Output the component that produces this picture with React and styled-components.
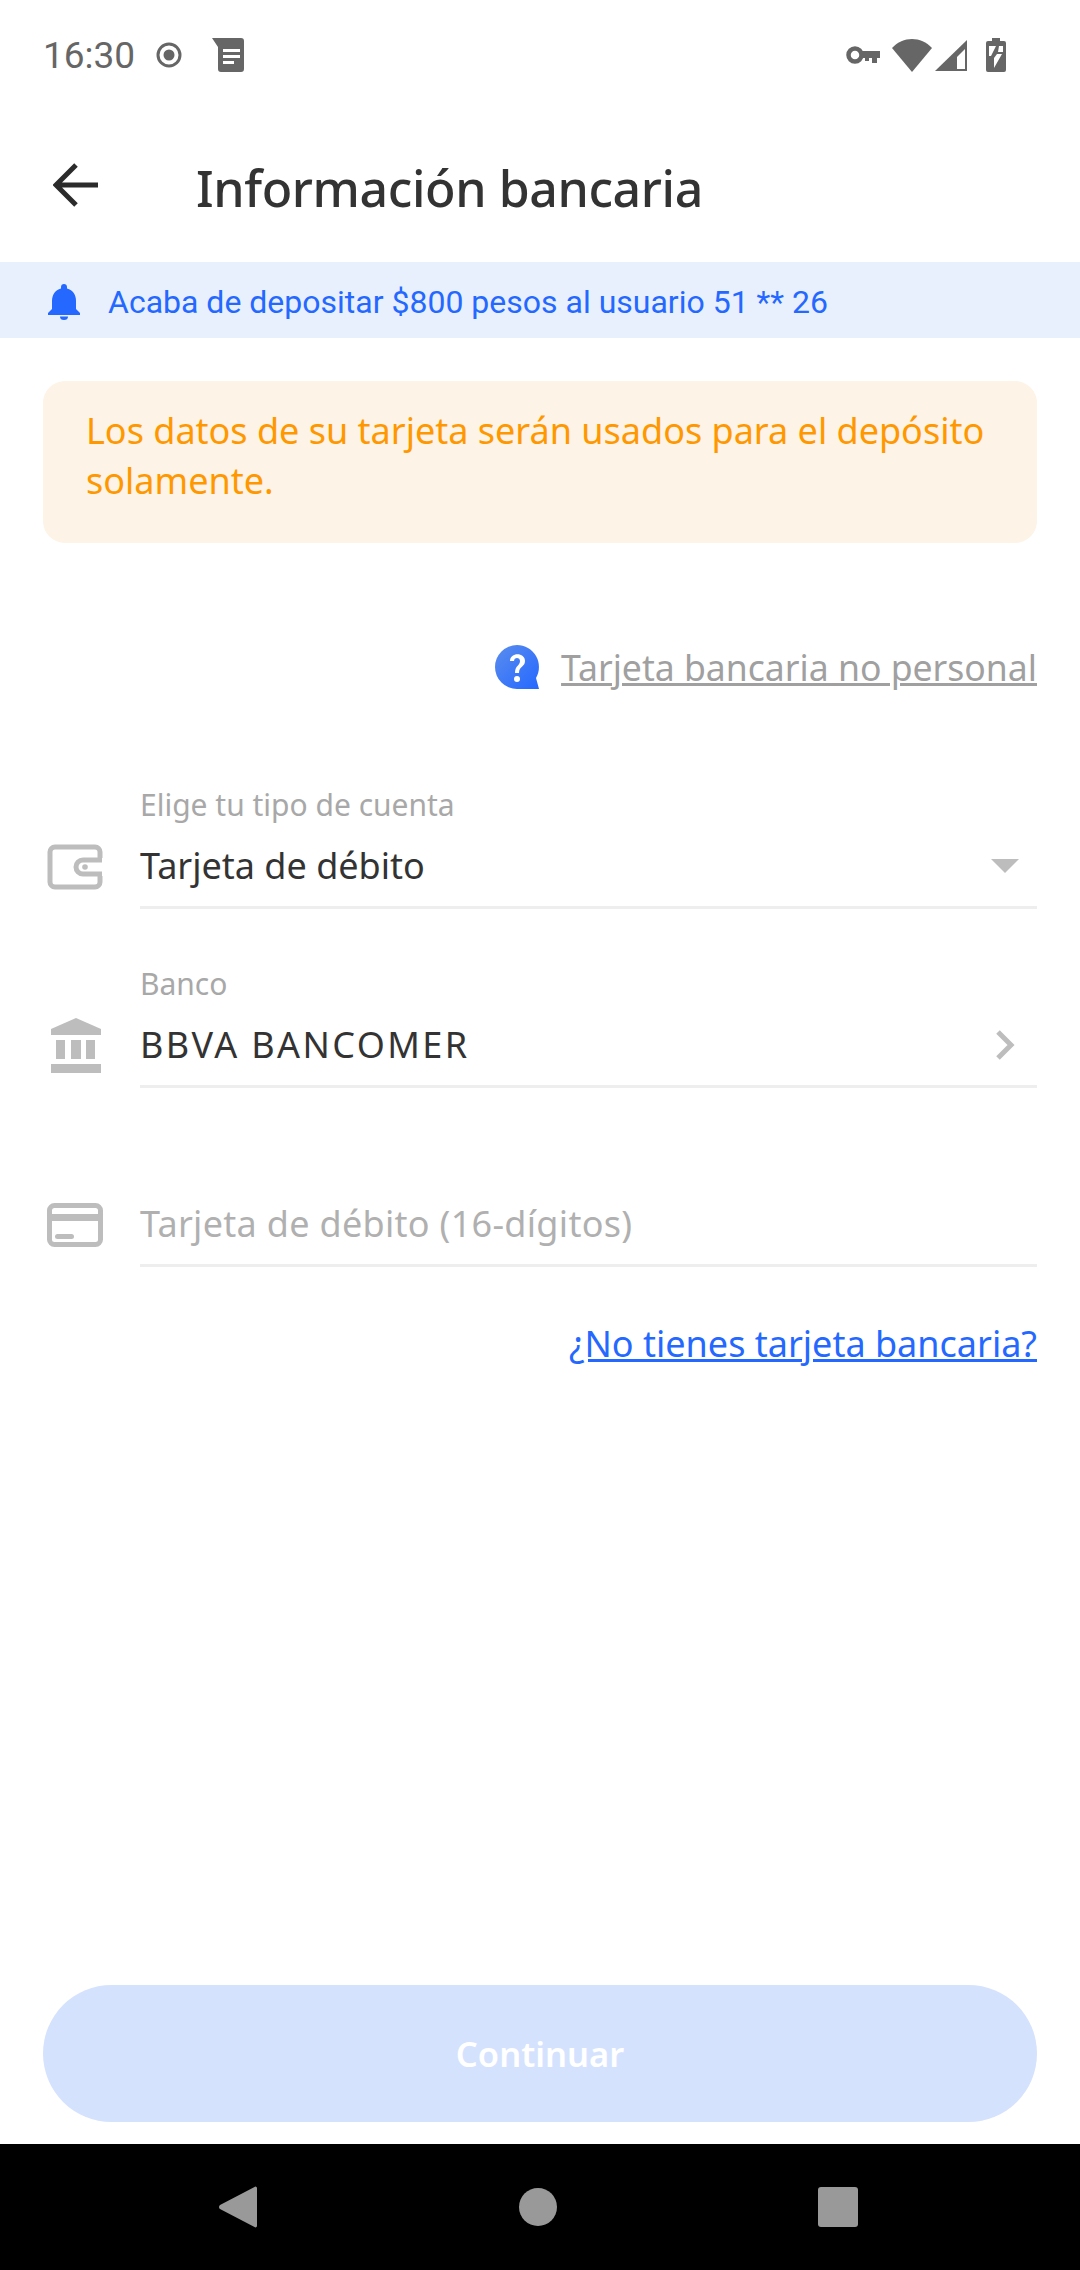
import styled, { createGlobalStyle } from "styled-components";

const Global = createGlobalStyle`
    html, body {
        margin: 0;
        padding: 0;
        background: #fff;
    }
    * { box-sizing: border-box; }
`

export default function App() {
    return(
        <Page>
            <Global />
            <StatusBar>
                <StatusLeft>
                    <Time>16:30</Time>
                    <svg width="26" height="26" viewBox="0 0 26 26" style={{ marginLeft: 21 }}>
                        <circle cx="13" cy="13" r="11" fill="none" stroke="#666" strokeWidth="3" />
                        <circle cx="13" cy="13" r="5.5" fill="#666" />
                    </svg>
                    <svg width="34" height="34" viewBox="0 0 34 34" style={{ marginLeft: 29 }}>
                        <path d="M1 0H30a3 3 0 0 1 3 3V31a3 3 0 0 1-3 3H10a3 3 0 0 1-3-3V9Z" fill="#666" />
                        <path d="M12 11H29V14H12ZM12 17H29V20H12ZM12 23H23V26H12Z" fill="#fff" />
                    </svg>
                </StatusLeft>
                <StatusRight>
                    <svg width="34" height="18" viewBox="0 0 34 18" style={{ marginRight: 12 }}>
                        <circle cx="9" cy="9" r="6.5" fill="none" stroke="#666" strokeWidth="4.5" />
                        <path d="M15 5H34V12H31V17H26V12H23V15H19V12H15Z" fill="#666" />
                    </svg>
                    <svg width="40" height="33" viewBox="0 0 40 33" style={{ marginRight: 3 }}>
                        <path d="M0 9C11 -3 29 -3 40 9L20 33Z" fill="#666" />
                    </svg>
                    <svg width="32" height="31" viewBox="0 0 32 31" style={{ marginRight: 19 }}>
                        <path d="M32 0V31H0Z" fill="#666" />
                        <path d="M30 9V29H22V17Z" fill="#fff" />
                    </svg>
                    <svg width="20" height="34" viewBox="0 0 20 34">
                        <path d="M6 0H14V3H18a2 2 0 0 1 2 2V32a2 2 0 0 1-2 2H2a2 2 0 0 1-2-2V5a2 2 0 0 1 2-2H6Z" fill="#666" />
                        <path d="M3 8H10L5 18H3ZM17 8V14H12L13 8ZM11 16H16L8 30V20Z" fill="#fff" />
                    </svg>
                </StatusRight>
            </StatusBar>

            <Header>
                <BackIcon viewBox="0 0 46 44">
                    <path d="M45 22H4M23 2L3 22L23 42" fill="none" stroke="#2b2b2b" strokeWidth="5" />
                </BackIcon>
                <Title>Información bancaria</Title>
            </Header>

            <Banner>
                <svg width="32" height="36" viewBox="0 0 32 36">
                    <path d="M16 0c1.8 0 3 1.3 3 3v1.500C25 6 28 11 28 17v8l4 4v2H0v-2l4-4v-8C4 11 7 6 13 4.500V3c0-1.700 1.200-3 3-3Z" fill="#2468ff" />
                    <path d="M12 32.500h8a4 3.500 0 0 1-8 0Z" fill="#2468ff" />
                </svg>
                <BannerText>Acaba de depositar $800 pesos al usuario 51 ** 26</BannerText>
            </Banner>

            <Content>
                <Notice>Los datos de su tarjeta serán usados para el depósito solamente.</Notice>

                <PersonalRow>
                    <svg width="44" height="44" viewBox="0 0 44 44">
                        <defs>
                            <linearGradient id="q" x1="0" y1="0" x2="1" y2="1">
                                <stop offset="0" stopColor="#5b8dee" />
                                <stop offset="1" stopColor="#2468ff" />
                            </linearGradient>
                        </defs>
                        <path d="M22 0a22 22 0 0 1 19 33l3 11H22A22 22 0 0 1 22 0Z" fill="url(#q)" />
                        <path d="M15 16c0-9 15-9 15 0 0 6-6 5-6 12h-4c0-8 5-7 5-12 0-4-6-4-6 0Z" fill="#fff" />
                        <circle cx="22" cy="34" r="3" fill="#fff" />
                    </svg>
                    <PersonalLink>Tarjeta bancaria no personal</PersonalLink>
                </PersonalRow>

                <Field>
                    <FieldLabel>Elige tu tipo de cuenta</FieldLabel>
                    <FieldIcon>
                        <svg width="56" height="46" viewBox="0 0 56 46">
                            <path d="M53 14V8a5 5 0 0 0-5-5H8a5 5 0 0 0-5 5V38a5 5 0 0 0 5 5H48a5 5 0 0 0 5-5V32" fill="none" stroke="#bdbdbd" strokeWidth="5" />
                            <path d="M55 16H36a7 7 0 0 0 0 14H55" fill="none" stroke="#bdbdbd" strokeWidth="5" />
                            <circle cx="38" cy="23" r="2.800" fill="#bdbdbd" />
                        </svg>
                    </FieldIcon>
                    <FieldValue>
                        <ValueText>Tarjeta de débito</ValueText>
                        <svg width="28" height="14" viewBox="0 0 28 14">
                            <path d="M0 0H28L14 14Z" fill="#bdbdbd" />
                        </svg>
                    </FieldValue>
                </Field>

                <Field>
                    <FieldLabel>Banco</FieldLabel>
                    <FieldIcon inset="8px">
                        <svg width="50" height="55" viewBox="0 0 50 55">
                            <path d="M25 0L50 11V17H0V11Z" fill="#bdbdbd" />
                            <path d="M5 22H14V41H5ZM20 22H30V41H20ZM35 22H44V41H35ZM0 46H50V55H0Z" fill="#bdbdbd" />
                        </svg>
                    </FieldIcon>
                    <FieldValue>
                        <ValueText spacing="2.4px">BBVA BANCOMER</ValueText>
                        <svg width="22" height="32" viewBox="0 0 22 32" style={{ marginRight: 3 }}>
                            <path d="M4 3L17 16L4 29" fill="none" stroke="#bdbdbd" strokeWidth="5" />
                        </svg>
                    </FieldValue>
                </Field>

                <Field>
                    <FieldLabel />
                    <FieldIcon>
                        <svg width="56" height="44" viewBox="0 0 56 44">
                            <rect x="2.500" y="2.500" width="51" height="39" rx="5" fill="none" stroke="#bdbdbd" strokeWidth="5" />
                            <rect x="2" y="11" width="52" height="7" fill="#bdbdbd" />
                            <rect x="8" y="31" width="19" height="5" rx="2.500" fill="#bdbdbd" />
                        </svg>
                    </FieldIcon>
                    <FieldValue>
                        <ValueText muted spacing="0.3px">Tarjeta de débito (16-dígitos)</ValueText>
                    </FieldValue>
                </Field>

                <HelpRow>
                    <HelpLink>¿No tienes tarjeta bancaria?</HelpLink>
                </HelpRow>

                <ContinueButton>Continuar</ContinueButton>
            </Content>

            <NavBar>
                <svg width="38" height="42" viewBox="0 0 38 42">
                    <path d="M38 2V40a1.500 1.500 0 0 1-2.500 1L1 23a2.500 2.500 0 0 1 0-4L35.500 1A1.500 1.500 0 0 1 38 2Z" fill="#999" />
                </svg>
                <svg width="38" height="38" viewBox="0 0 38 38">
                    <circle cx="19" cy="19" r="19" fill="#999" />
                </svg>
                <svg width="40" height="40" viewBox="0 0 40 40">
                    <rect width="40" height="40" rx="3" fill="#999" />
                </svg>
            </NavBar>
        </Page>
    );
}


const Page = styled.div`
    display: flex;
    flex-direction: column;
    width: 1080px;
    height: 2270px;
    background-color: #fff;
    font-family: "Noto Sans", "Open Sans", sans-serif;
    overflow: hidden;
`
const StatusBar = styled.div`
    display: flex;
    justify-content: space-between;
    align-items: center;
    height: 110px;
    padding: 0 74px 0 43px;
`
const StatusLeft = styled.div`
    display: flex;
    align-items: center;
`
const StatusRight = styled.div`
    display: flex;
    align-items: center;
`
const Time = styled.span`
    font-family: Roboto, sans-serif;
    font-size: 37px;
    color: #666;
`
const Header = styled.div`
    display: flex;
    align-items: center;
    height: 152px;
    padding: 4px 0 0 53px;
`
const BackIcon = styled.svg`
    width: 46px;
    height: 44px;
    margin-right: 97px;
    margin-top: -6px;
`
const Title = styled.h1`
    margin: 0;
    font-size: 50px;
    font-weight: 500;
    color: #333;
    letter-spacing: -0.4px;
`
const Banner = styled.div`
    display: flex;
    align-items: center;
    height: 76px;
    padding: 4px 0 0 48px;
    gap: 28px;
    background-color: #e8f0fe;
`
const BannerText = styled.span`
    font-family: Roboto, sans-serif;
    font-size: 32px;
    color: #2468ff;
`
const Content = styled.div`
    flex: 1;
    display: flex;
    flex-direction: column;
    padding: 43px 43px 22px;
`
const Notice = styled.div`
    height: 162px;
    padding: 25px 43px 0;
    border-radius: 22px;
    background-color: #fdf3e6;
    color: #ff9800;
    font-size: 36px;
    line-height: 50px;
`
const PersonalRow = styled.div`
    display: flex;
    justify-content: flex-end;
    align-items: center;
    gap: 22px;
    margin-top: 100px;
    margin-bottom: 39px;
`
const PersonalLink = styled.a`
    color: #a0a0a0;
    font-size: 35.6px;
    text-decoration: underline;
`
const Field = styled.div`
    display: grid;
    grid-template-columns: 97px 1fr;
    grid-template-rows: 44px 81px;
    margin-top: 54px;
`
const FieldLabel = styled.div`
    grid-column: 2;
    color: #a8a8a8;
    font-size: 30px;
    line-height: 42px;
`
const FieldIcon = styled.div`
    display: flex;
    align-items: center;
    padding-left: ${(props) => props.inset || "4px"};
    padding-bottom: 4px;
`
const FieldValue = styled.div`
    display: flex;
    justify-content: space-between;
    align-items: center;
    padding: 0 18px 3px 0;
    border-bottom: 3px solid #eee;
`
const ValueText = styled.span`
    color: ${(props) => props.muted ? "#b0b0b0" : "#333"};
    font-size: 36px;
    letter-spacing: ${(props) => props.spacing || "0"};
`
const HelpRow = styled.div`
    display: flex;
    justify-content: flex-end;
    margin-top: 52px;
`
const HelpLink = styled.a`
    color: #2468ff;
    font-size: 36px;
    text-decoration: underline;
`
const ContinueButton = styled.div`
    display: flex;
    justify-content: center;
    align-items: center;
    height: 137px;
    margin-top: auto;
    border-radius: 69px;
    background-color: #d5e2fe;
    color: #fff;
    font-size: 34.5px;
    font-weight: 600;
`
const NavBar = styled.div`
    display: flex;
    justify-content: space-between;
    align-items: center;
    height: 126px;
    padding: 0 222px 0 219px;
    background-color: #000;
`
